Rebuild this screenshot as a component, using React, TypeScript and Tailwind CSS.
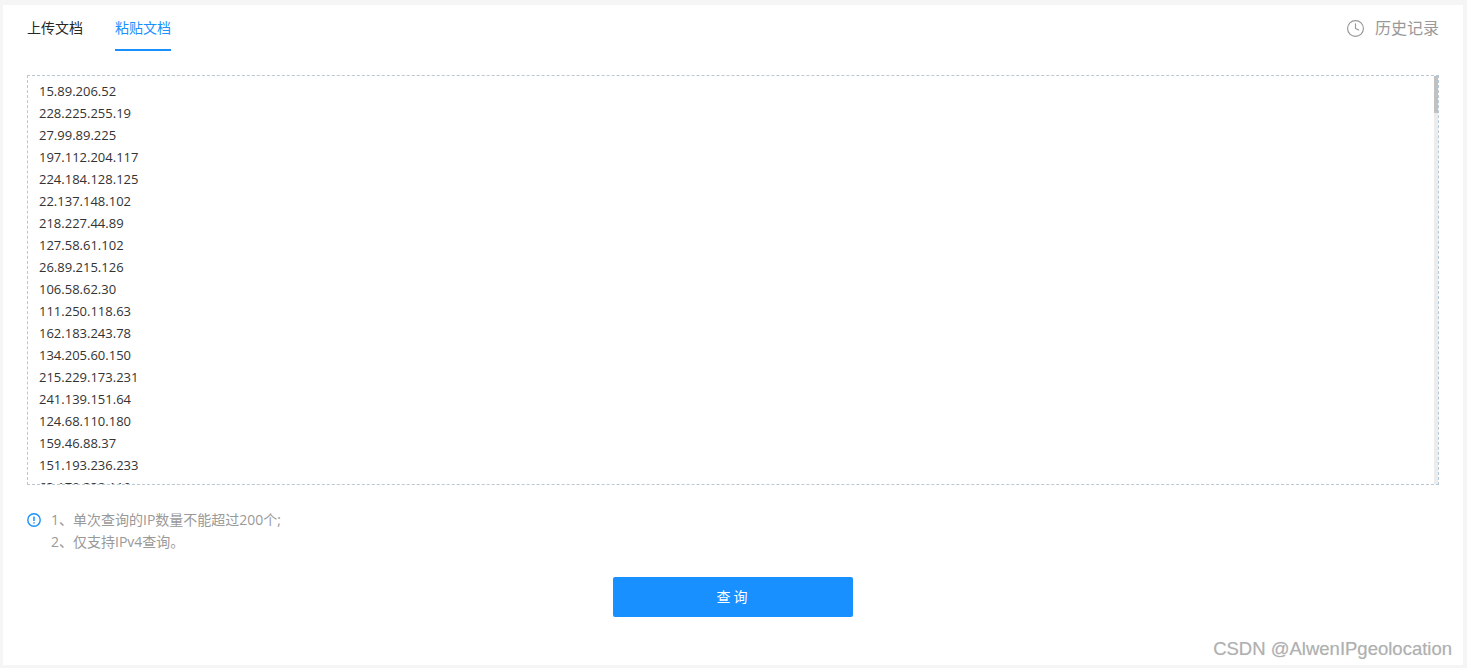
import React from 'react';
import { Clock } from 'lucide-react';

const ips = [
  '15.89.206.52',
  '228.225.255.19',
  '27.99.89.225',
  '197.112.204.117',
  '224.184.128.125',
  '22.137.148.102',
  '218.227.44.89',
  '127.58.61.102',
  '26.89.215.126',
  '106.58.62.30',
  '111.250.118.63',
  '162.183.243.78',
  '134.205.60.150',
  '215.229.173.231',
  '241.139.151.64',
  '124.68.110.180',
  '159.46.88.37',
  '151.193.236.233',
  '63.179.238.119',
];

const font = "font-['Open_Sans','Noto_Sans_CJK_SC',sans-serif]";

export default function App() {
  return (
    <div className={`h-[668px] w-full bg-[#f5f5f5] pt-[5px] pb-[3px] pl-[3px] pr-[4px] ${font}`}>
      <div className="relative flex h-full flex-col bg-white px-[24px]">
        {/* Tabs */}
        <div className="flex h-[46px] items-start justify-between">
          <div className="flex gap-[32px] text-[14px] leading-[20px]">
            <div className="h-[46px] pt-[13px] text-[#262626]">上传文档</div>
            <div className="h-[46px] border-b-2 border-[#1890ff] pt-[13px] text-[#1890ff]">粘贴文档</div>
          </div>
          <div className="flex items-center gap-[10px] pt-[11px] text-[16px] leading-[24px] text-[#999999]">
            <Clock className="h-[19px] w-[19px]" strokeWidth={1.5} />
            <span>历史记录</span>
          </div>
        </div>

        {/* IP list */}
        <div className="mt-[24px] flex h-[410px] overflow-hidden border border-dashed border-[#b7c9d6]">
          <div className="flex-1 overflow-hidden px-[11px] pt-[4px] text-[13px] leading-[22px] text-[#333333]">
            {ips.map((ip) => (
              <div key={ip}>{ip}</div>
            ))}
          </div>
          <div className="w-[4px] bg-[#ececec]">
            <div className="h-[37px] bg-[#c1c1c1]" />
          </div>
        </div>

        {/* Notes */}
        <div className="mt-[24px] flex text-[14px] leading-[22px] text-[#999999]">
          <div className="flex h-[22px] w-[24px] items-center">
            <svg width="14" height="14" viewBox="0 0 14 14" fill="none">
              <circle cx="7" cy="7" r="6.2" stroke="#1890ff" strokeWidth="1.4" />
              <path d="M7 3.4V8" stroke="#1890ff" strokeWidth="1.5" />
              <path d="M7 9.2V10.6" stroke="#1890ff" strokeWidth="1.5" />
            </svg>
          </div>
          <div>
            <div>1、单次查询的IP数量不能超过200个;</div>
            <div>2、仅支持IPv4查询。</div>
          </div>
        </div>

        {/* Submit */}
        <div className="mt-[24px] flex justify-center">
          <button className="h-[40px] w-[240px] rounded-[2px] bg-[#1890ff] pb-[2px] pl-[1px] text-[14px] tracking-[3px] text-white">
            查询
          </button>
        </div>

        <div className="absolute right-[11px] bottom-[3px] font-['Liberation_Sans',sans-serif] text-[18.5px] leading-[26px] text-[#b0b0b0] [text-shadow:0_0_1px_rgba(0,0,0,0.15)]">
          CSDN @AlwenIPgeolocation
        </div>
      </div>
    </div>
  );
}
